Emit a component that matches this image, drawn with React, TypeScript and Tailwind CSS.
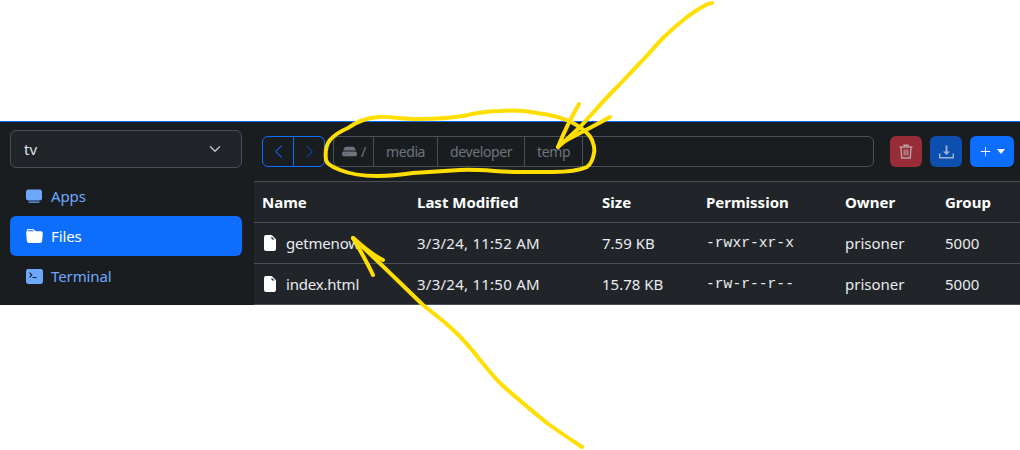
import {
  BsChevronDown,
  BsChevronLeft,
  BsChevronRight,
  BsFileEarmarkFill,
  BsFolderFill,
  BsHddFill,
  BsPlusLg,
  BsTerminalFill,
} from "react-icons/bs";

function AppsIcon({ size, className }: { size: number; className?: string }) {
  return (
    <svg width={size} height={size} viewBox="0 0 17 17" fill="currentColor" className={className}>
      <rect x="0" y="1.5" width="16" height="11" rx="2.5" />
      <rect x="2.5" y="13.5" width="11" height="1.2" rx="0.5" />
    </svg>
  );
}

function TrashIcon() {
  return (
    <svg width="14" height="15" viewBox="0 0 14 15" fill="none" stroke="currentColor" strokeWidth="1.4">
      <path d="M0.5 3H13.5" />
      <path d="M5 3V1.2H9V3" />
      <path d="M2 3L2.7 14H11.3L12 3" />
      <path d="M5.2 5.5V11.5M7 5.5V11.5M8.8 5.5V11.5" strokeWidth="1" />
    </svg>
  );
}

function DownloadIcon() {
  return (
    <svg width="15" height="14" viewBox="0 0 15 14" fill="none" stroke="currentColor" strokeWidth="1.4">
      <path d="M0.7 8.5V12.8H14.3V8.5" />
      <path d="M7.5 0.5V8" strokeWidth="1.8" />
      <path d="M4 6.5H11L7.5 10Z" fill="currentColor" stroke="none" />
    </svg>
  );
}

const NAV = [
  { label: "Apps", Icon: AppsIcon },
  { label: "Files", Icon: BsFolderFill, active: true },
  { label: "Terminal", Icon: BsTerminalFill },
];

const CRUMBS = ["media", "developer", "temp"];

const FILES = [
  { name: "getmenow", modified: "3/3/24, 11:52 AM", size: "7.59 KB", perm: "-rwxr-xr-x" },
  { name: "index.html", modified: "3/3/24, 11:50 AM", size: "15.78 KB", perm: "-rw-r--r--" },
];

const COLS = "grid grid-cols-[155px_185px_104px_139px_100px_1fr] pl-2 items-center";

function Sidebar() {
  return (
    <aside className="w-[254px] shrink-0 pl-2.5 pr-3 pt-2">
      <div className="flex h-[38px] items-center justify-between rounded-md border border-[#495057] bg-[#212529] pl-[13px] pr-[20px] text-[#dee2e6]">
        <span>tv</span>
        <BsChevronDown size={12} strokeWidth={0.8} />
      </div>
      <nav className="mt-2 flex flex-col">
        {NAV.map(({ label, Icon, active }) => (
          <div
            key={label}
            className={
              active
                ? "flex h-10 items-center gap-2 rounded-md bg-[#0d6efd] px-4 text-white"
                : "flex h-10 items-center gap-2 rounded-md px-4 text-[#6ea8fe]"
            }
          >
            <Icon size={17} className="shrink-0" />
            <span className="tracking-[-0.1px]">{label}</span>
          </div>
        ))}
      </nav>
    </aside>
  );
}

function Toolbar() {
  return (
    <div className="flex h-[59px] items-center pl-2 pr-1.5">
      <div className="flex h-[31px] w-[63px] rounded-md border border-[#0d6efd]">
        <button className="flex flex-1 items-center justify-center border-r border-[#0d6efd] text-[#0d6efd]">
          <BsChevronLeft size={15} />
        </button>
        <button className="flex flex-1 items-center justify-center text-[#0a4ba8]">
          <BsChevronRight size={15} />
        </button>
      </div>
      <div className="ml-2 flex h-[31px] w-[541px] items-center rounded-md border border-[#495057] text-[14px] tracking-[-0.4px] text-[#6c757d]">
        <div className="flex h-full w-[40px] items-center gap-1 border-r border-[#495057] pl-2">
          <BsHddFill size={15} className="shrink-0" />
          <span>/</span>
        </div>
        {CRUMBS.map((crumb) => (
          <div key={crumb} className="flex h-full items-center border-r border-[#495057] px-3">
            {crumb}
          </div>
        ))}
      </div>
      <button className="ml-4 flex h-[31px] w-8 items-center justify-center rounded-md bg-[#982d38] text-[#b9a0a4]">
        <TrashIcon />
      </button>
      <button className="ml-2 flex h-[31px] w-8 items-center justify-center rounded-md bg-[#0d4fae] text-[#9db2d4]">
        <DownloadIcon />
      </button>
      <button className="ml-2 flex h-[31px] w-11 items-center justify-center gap-[5px] rounded-md bg-[#0d6efd] text-white">
        <BsPlusLg size={13} />
        <span className="h-0 w-0 border-x-[4px] border-t-[5px] border-x-transparent border-t-white" />
      </button>
    </div>
  );
}

function FileTable() {
  return (
    <div className="border-t border-[#495057] bg-[#212529] text-[#e9ecef]">
      <div className={`${COLS} h-[41px] border-b border-[#495057] font-bold text-white`}>
        <span>Name</span>
        <span>Last Modified</span>
        <span>Size</span>
        <span>Permission</span>
        <span>Owner</span>
        <span>Group</span>
      </div>
      {FILES.map((file) => (
        <div key={file.name} className={`${COLS} h-[41px] border-b border-[#495057]`}>
          <span className="flex items-center gap-2">
            <BsFileEarmarkFill size={16} className="text-white" />
            <span className="tracking-[-0.2px]">{file.name}</span>
          </span>
          <span className="tracking-[0.25px]">{file.modified}</span>
          <span>{file.size}</span>
          <span className="font-['Liberation_Mono',monospace] text-[14.67px]">{file.perm}</span>
          <span>prisoner</span>
          <span>5000</span>
        </div>
      ))}
    </div>
  );
}

// marker scribbles drawn on top of the screenshot
function Annotations() {
  return (
    <svg className="pointer-events-none absolute left-0 top-0" width="1020" height="450" fill="none" stroke="#ffde00" strokeWidth="4" strokeLinecap="round" strokeLinejoin="round">
      <path d="M348 128C356 122 366 118 378 117C392 116 406 120 420 119C436 119 450 118 463 116C476 113 488 111 500 111C514 110 526 111 537 113C552 115 564 118 573 123C582 128 589 133 592 140C594 145 595 149 594 153C593 159 591 164 587 167C578 171 566 172 553 172C542 172 532 172 520 172C500 172 480 169 460 170C444 171 428 172 413 173C400 175 390 176 377 176C362 176 350 174 340 170C332 167 327 164 326 160C325 152 326 145 330 140C335 134 341 131 348 128" />
      <path d="M712 3C704 4 696 11 687 17C678 24 670 31 663 38C655 46 648 55 640 63C632 71 625 79 617 87C604 100 592 114 580 127C572 135 565 141 558 147" />
      <path d="M579 104C572 116 564 132 558 147" />
      <path d="M610 117C596 125 578 134 563 142" />
      <path d="M582 447C570 439 558 431 547 423C531 410 515 397 500 383C493 376 487 368 480 360C471 348 461 337 450 327C441 319 432 312 423 305C400 283 376 259 353 238" />
      <path d="M373 275C367 262 360 250 353 238" />
      <path d="M383 260C372 255 362 246 353 238" />
    </svg>
  );
}

export default function App() {
  return (
    <div className="relative h-[450px] w-[1020px] overflow-hidden bg-white font-['Noto_Sans','Open_Sans',sans-serif] text-[15px]">
      <div className="mt-[121px] flex h-[184px] border-t border-[#0d6efd] bg-[#1a1d20]">
        <Sidebar />
        <main className="min-w-0 flex-1">
          <Toolbar />
          <FileTable />
        </main>
      </div>
      <Annotations />
    </div>
  );
}
